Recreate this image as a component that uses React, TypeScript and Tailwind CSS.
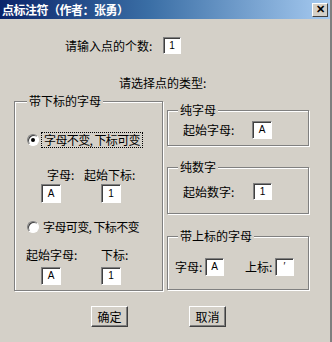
import React from "react";

const font = { fontFamily: '"Noto Sans CJK SC", "Noto Sans", sans-serif' };

function Box({ v, w = "w-[19px]", h = "h-[18px]" }: { v: string; w?: string; h?: string }) {
  return (
    <div
      className={`${w} ${h} shrink-0 bg-white border-t border-l border-t-[#808080] border-l-[#808080] border-b border-r border-b-white border-r-white shadow-[inset_1px_1px_0_#404040] flex items-center justify-center text-[10px] text-black leading-none`}
      style={{ fontFamily: '"Liberation Sans", sans-serif' }}
    >
      {v}
    </div>
  );
}

function Group({
  title,
  className,
  legendLeft,
  children,
}: {
  title: string;
  className: string;
  legendLeft: string;
  children?: React.ReactNode;
}) {
  return (
    <div
      className={`relative border border-[#808080] shadow-[inset_1px_1px_0_#fff,1px_1px_0_#fff] ${className}`}
    >
      <span
        className={`absolute -top-[8px] ${legendLeft} bg-[#d4d0c8] px-[2px] text-[12px] leading-[14px] text-black`}
      >
        {title}
      </span>
      {children}
    </div>
  );
}

function Radio({ checked }: { checked?: boolean }) {
  return (
    <div className="w-[12px] h-[12px] rounded-full bg-white shrink-0 flex items-center justify-center border border-t-[#808080] border-l-[#808080] border-b-white border-r-white shadow-[inset_1px_1px_0_#404040]">
      {checked && <div className="w-[4px] h-[4px] rounded-full bg-black" />}
    </div>
  );
}

function Btn({ label }: { label: string }) {
  return (
    <div className="w-[37px] h-[21px] flex items-center justify-center border border-t-white border-l-white border-b-[#404040] border-r-[#404040] shadow-[inset_-1px_-1px_0_#808080] text-[12px] text-black leading-none">
      {label}
    </div>
  );
}

export default function App() {
  return (
    <div
      className="w-[332px] h-[342px] bg-[#d4d0c8] text-black overflow-hidden flex flex-col border-r-2 border-r-[#808080]"
      style={font}
    >
      {/* Title bar */}
      <div className="h-[19px] shrink-0 flex items-center justify-between bg-[linear-gradient(to_right,#0a246a,#3a6ea5_45%,#a6caf0)] pl-[2px] pr-[2px]">
        <span className="text-white font-bold text-[12px] leading-none tracking-[-0.5px]">
          点标注符（作者：张勇）
        </span>
        <div
          className="w-[16px] h-[14px] bg-[#d4d0c8] border border-t-white border-l-white border-b-[#404040] border-r-[#404040] flex items-center justify-center text-[11px] font-bold leading-none text-black"
          style={{ fontFamily: '"Liberation Sans", sans-serif' }}
        >
          ✕
        </div>
      </div>

      {/* Count row */}
      <div className="mt-[18px] flex items-center pl-[65px]">
        <span className="w-[98px] text-[12px] leading-[14px]">请输入点的个数:</span>
        <Box v="1" w="w-[18px]" h="h-[17px]" />
      </div>

      {/* Type prompt */}
      <div className="mt-[22px] pl-[119px] text-[12px] leading-[14px]">请选择点的类型:</div>

      {/* Groups */}
      <div className="mt-[11px] flex">
        <Group title="带下标的字母" className="ml-[14px] w-[149px] h-[190px] flex flex-col" legendLeft="left-[12px]">
          <div className="mt-[30px] h-[16px] flex items-center pl-[12px]">
            <Radio checked />
            <div className="ml-[2px] h-[16px] px-[2px] flex items-center border border-dotted border-black text-[12px] leading-none tracking-[-0.6px]">
              字母不变, 下标可变
            </div>
          </div>
          <div className="mt-[20px] h-[14px] flex text-[12px] leading-[14px]">
            <span className="ml-[32px] w-[37px]">字母:</span>
            <span>起始下标:</span>
          </div>
          <div className="mt-[2px] flex">
            <div className="ml-[26px]"><Box v="A" w="w-[20px]" h="h-[19px]" /></div>
            <div className="ml-[40px]"><Box v="1" w="w-[20px]" h="h-[19px]" /></div>
          </div>
          <div className="mt-[16px] h-[16px] flex items-center pl-[12px]">
            <Radio />
            <span className="ml-[4px] text-[12px] leading-none tracking-[-0.6px]">字母可变, 下标不变</span>
          </div>
          <div className="mt-[13px] h-[14px] flex text-[12px] leading-[14px]">
            <span className="ml-[11px] w-[75px]">起始字母:</span>
            <span>下标:</span>
          </div>
          <div className="mt-[5px] flex">
            <div className="ml-[26px]"><Box v="A" w="w-[20px]" h="h-[18px]" /></div>
            <div className="ml-[40px]"><Box v="1" w="w-[20px]" h="h-[18px]" /></div>
          </div>
        </Group>

        <div className="ml-[4px] w-[142px] flex flex-col">
          <Group title="纯字母" className="mt-[9px] h-[36px]" legendLeft="left-[10px]">
            <div className="mt-[10px] flex items-center">
              <span className="ml-[15px] w-[69px] text-[12px] leading-[14px]">起始字母:</span>
              <Box v="A" w="w-[20px]" h="h-[18px]" />
            </div>
          </Group>
          <Group title="纯数字" className="mt-[21px] h-[47px]" legendLeft="left-[10px]">
            <div className="mt-[15px] flex items-center">
              <span className="ml-[15px] w-[70px] text-[12px] leading-[14px]">起始数字:</span>
              <Box v="1" w="w-[19px]" h="h-[17px]" />
            </div>
          </Group>
          <Group title="带上标的字母" className="mt-[22px] h-[54px]" legendLeft="left-[10px]">
            <div className="mt-[21px] flex items-center text-[12px] leading-[14px]">
              <span className="ml-[7px] w-[30px]">字母:</span>
              <Box v="A" w="w-[19px]" h="h-[18px]" />
              <span className="ml-[21px] w-[30px]">上标:</span>
              <Box v="′" w="w-[19px]" h="h-[18px]" />
            </div>
          </Group>
        </div>
      </div>

      {/* Buttons */}
      <div className="mt-[15px] flex pl-[91px] gap-[61px]">
        <Btn label="确定" />
        <Btn label="取消" />
      </div>
    </div>
  );
}
